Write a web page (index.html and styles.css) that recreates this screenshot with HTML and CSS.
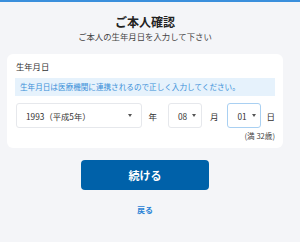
FILE: index.html
```html
<!DOCTYPE html>
<html lang="ja">
<head>
<meta charset="utf-8">
<link rel="stylesheet" href="styles.css">
</head>
<body>
<div class="topbar"></div>
<main class="page">
  <header class="head">
    <h1 class="title">ご本人確認</h1>
    <p class="subtitle">ご本人の生年月日を入力して下さい</p>
  </header>
  <section class="card">
    <div class="label">生年月日</div>
    <div class="info">生年月日は医療機関に連携されるので正しく入力してください。</div>
    <div class="row">
      <div class="select year"><span>1993（平成5年）</span><i class="caret"></i></div>
      <span class="unit u-year">年</span>
      <div class="select small"><span>08</span><i class="caret"></i></div>
      <span class="unit u-month">月</span>
      <div class="select small focus"><span>01</span><i class="caret"></i></div>
      <span class="unit u-day">日</span>
    </div>
    <div class="age">(満 32歳)</div>
  </section>
  <div class="actions">
    <button class="primary">続ける</button>
    <a class="back">戻る</a>
  </div>
</main>
</body>
</html>
```
FILE: styles.css
```css
* { box-sizing: border-box; }
html, body { margin: 0; padding: 0; }
body {
  background: #f4f5f8;
  font-family: "Noto Sans CJK JP", "Noto Sans", sans-serif;
  color: #333;
  width: 300px;
  height: 242px;
  overflow: hidden;
}
.topbar { height: 2px; background: #3a8fdc; }
.page { margin: 0 17px 0 7px; }
.head { text-align: center; padding-top: 12px; }
.title {
  margin: 0;
  font-size: 12px;
  line-height: 15px;
  font-weight: 700;
  color: #222;
}
.subtitle {
  margin: 1px 0 0;
  font-size: 8.4px;
  line-height: 12px;
  color: #444;
}
.card {
  margin-top: 12px;
  background: #fff;
  border-radius: 6px;
  padding: 6px 8px 7px 8px;
}
.label { font-size: 8.3px; line-height: 12px; color: #333; padding-left: 1px; }
.info {
  margin-top: 6px;
  height: 18px;
  background: #e6f2fc;
  color: #3a8fd8;
  font-size: 7.6px;
  line-height: 18px;
  padding-left: 5px;
  white-space: nowrap;
  overflow: hidden;
}
.row {
  display: flex;
  align-items: center;
  margin-top: 7px;
  padding-left: 1px;
}
.select {
  height: 25px;
  border: 1px solid #e6e8ec;
  border-radius: 3px;
  display: flex;
  align-items: center;
  font-size: 8.3px;
  color: #333;
  background: #fff;
}
.select.year { width: 131px; padding: 0 9px 0 9px; justify-content: space-between; }
.select.small { width: 35px; padding: 0 0 0 9px; }
.select.small .caret { margin-left: 5px; }
.select.focus { border-color: #a9d0f2; }
.caret {
  width: 0; height: 0;
  border-left: 2.5px solid transparent;
  border-right: 2.5px solid transparent;
  border-top: 3px solid #555;
}
.unit { font-size: 8.5px; line-height: 12px; color: #333; }
.u-year { margin: 0 11px 0 6px; }
.u-month { margin: 0 9px 0 8px; }
.u-day { margin: 0 0 0 5px; }
.age {
  text-align: right;
  font-size: 7.6px;
  line-height: 10px;
  color: #444;
  margin-top: 3px;
}
.actions {
  display: flex;
  flex-direction: column;
  align-items: center;
  margin-top: 12px;
}
.primary {
  width: 128px;
  height: 30px;
  border: none;
  border-radius: 4px;
  background: #0061a9;
  color: #fff;
  font-family: inherit;
  font-size: 11px;
  font-weight: 700;
  padding: 0;
}
.back {
  margin-top: 14px;
  font-size: 8px;
  line-height: 12px;
  font-weight: 700;
  color: #2b83d6;
}
```
